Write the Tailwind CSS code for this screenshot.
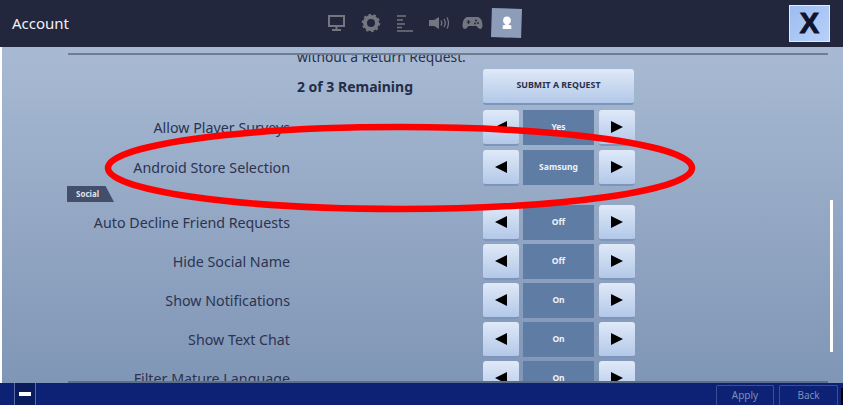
<!DOCTYPE html>
<html><head><meta charset="utf-8">
<script src="https://cdn.jsdelivr.net/npm/@tailwindcss/browser@4"></script>
</head>
<body class="m-0 bg-white overflow-hidden">
<div class="relative w-[843px] h-[405px] flex flex-col overflow-hidden font-['Noto_Sans',sans-serif]">
  <header class="h-[47px] shrink-0 bg-[#23273d] flex items-center relative">
    <span class="ml-3 text-[15px] text-[#eef1f7]">Account</span>
    <div class="absolute left-[327px] top-[8px] flex items-center text-[#7d7f8b]">
      <svg class="w-[20px] h-[20px] mr-[14px]" viewBox="0 0 20 20" fill="none" stroke="#74767f" stroke-width="2"><rect x="2" y="3" width="15" height="10"/><path d="M9.500 13v3M5 17h9"/></svg>
      <svg class="w-[20px] h-[20px] mr-[14px]" viewBox="0 0 20 20" fill="none"><circle cx="10" cy="10" r="6" stroke="#74767f" stroke-width="4"/><circle cx="10" cy="10" r="8" stroke="#74767f" stroke-width="2.400" stroke-dasharray="2.400 2.600"/></svg>
      <svg class="w-[20px] h-[20px] mr-[13px]" viewBox="0 0 20 20" fill="none" stroke="#74767f" stroke-width="1.600"><path d="M2 3h9M2 7h6M2 11h8M2 14.500h5M2 18h16"/></svg>
      <svg class="w-[22px] h-[20px] mr-[12px]" viewBox="0 0 22 20" fill="none"><path d="M1 7h5l5-3v12l-5-3H1z" fill="#74767f"/><path d="M13 7.500q1.500 2.500 0 5M16 6q2.500 4 0 8M19 4.500q3 5.500 0 11" stroke="#74767f" stroke-width="1.300"/></svg>
      <svg class="w-[21px] h-[20px] mr-[8px]" viewBox="0 0 21 20"><path d="M5 4h11q4 1 4.500 8 0 4-2.500 4-1.500 0-3.500-3h-8q-2 3-3.500 3-2.500 0-2.500-4Q1 5 5 4z" fill="#74767f"/><path d="M4.500 9h4M6.500 7v4" stroke="#23273d" stroke-width="1.200"/><circle cx="14" cy="7.500" r="1" fill="#23273d"/><circle cx="16" cy="10" r="1" fill="#23273d"/><circle cx="13" cy="10.500" r="1" fill="#23273d"/></svg>
      <div class="w-[31px] h-[30px] bg-[#8d9db9] [clip-path:polygon(3%_0,100%_3%,97%_100%,0_97%)] flex items-center justify-center">
        <svg class="w-[12px] h-[14px]" viewBox="0 0 14 16"><circle cx="7" cy="5" r="4.500" fill="#fff"/><path d="M5 8h4v2l3 1v4H2v-4l3-1z" fill="#fff"/></svg>
      </div>
    </div>
    <div class="absolute left-[789px] top-[5px] w-[41px] h-[37px] bg-gradient-to-br from-[#9dbdf0] to-[#b7d0f8] border border-[#e4ebf7] flex items-center justify-center font-['Liberation_Sans',sans-serif] font-bold text-[29px] [-webkit-text-stroke:1px_#10132c] text-[#10132c]">X</div>
  </header>

  <main class="flex-1 relative overflow-hidden bg-gradient-to-b from-[#a8bad3] to-[#8096b6] border-l-2 border-white">
    <div class="h-[8px] mx-[66px] w-[760px] border-b-2 border-[#6f7c92]"></div>
    <div class="absolute left-0 top-[8px] w-[706px] h-[14px] overflow-hidden"><p class="absolute left-[295px] top-[-8px] whitespace-nowrap text-[13.800px] text-[#2a304a]">without a Return Request.</p></div>
    <div class="flex items-center h-[36px] mt-[14px]">
      <div class="w-[411px] text-right pr-0 text-[14px] font-bold text-[#262c47] -translate-y-[1px]">2 of 3 Remaining</div>
      <button class="ml-[70px] w-[151px] h-[36px] rounded-[3px] bg-gradient-to-b from-[#dfe9f8] to-[#b3c8e8] border-b-2 border-[#7e95bb] text-[8.800px] font-bold text-[#2a304a]">SUBMIT A REQUEST</button>
    </div>
    <div class="flex flex-col mt-[5px]">
      <div class="flex items-center h-[36px] mb-[4px]"><div class="w-[288px] text-right text-[14.250px] text-[#2c3350]">Allow Player Surveys</div><div class="ml-[193px] flex gap-[4px]"><button class="w-[36px] h-[36px] rounded-[3px] bg-gradient-to-b from-[#dfe9f8] to-[#b3c8e8] border-b-2 border-[#7e95bb] flex items-center justify-center"><span class="w-0 h-0 border-y-[6px] border-y-transparent border-r-[12px] border-r-black"></span></button><div class="w-[71px] mr-[1px] h-[35px] bg-[#5f7ca4] flex items-center justify-center text-[8.500px] font-bold text-[#eef2f8]">Yes</div><button class="w-[36px] h-[36px] rounded-[3px] bg-gradient-to-b from-[#dfe9f8] to-[#b3c8e8] border-b-2 border-[#7e95bb] flex items-center justify-center"><span class="w-0 h-0 border-y-[6px] border-y-transparent border-l-[12px] border-l-black"></span></button></div></div>
      <div class="flex items-center h-[36px]"><div class="w-[288px] text-right text-[14.250px] text-[#2c3350]">Android Store Selection</div><div class="ml-[193px] flex gap-[4px]"><button class="w-[36px] h-[36px] rounded-[3px] bg-gradient-to-b from-[#dfe9f8] to-[#b3c8e8] border-b-2 border-[#7e95bb] flex items-center justify-center"><span class="w-0 h-0 border-y-[6px] border-y-transparent border-r-[12px] border-r-black"></span></button><div class="w-[71px] mr-[1px] h-[35px] bg-[#5f7ca4] flex items-center justify-center text-[8.500px] font-bold text-[#eef2f8]">Samsung</div><button class="w-[36px] h-[36px] rounded-[3px] bg-gradient-to-b from-[#dfe9f8] to-[#b3c8e8] border-b-2 border-[#7e95bb] flex items-center justify-center"><span class="w-0 h-0 border-y-[6px] border-y-transparent border-l-[12px] border-l-black"></span></button></div></div>
      <div class="h-[19px] flex items-end"><div class="ml-[65px] w-[47px] h-[16px] bg-[#434e6b] [clip-path:polygon(0_0,82%_0,100%_100%,0_100%)] text-[8px] font-bold text-[#dfe4ee] pl-[9px] leading-[16px] translate-y-[-3px]">Social</div></div>
      <div class="flex flex-col gap-[3px]">
        <div class="flex items-center h-[36px]"><div class="w-[288px] text-right text-[14.250px] text-[#2c3350]">Auto Decline Friend Requests</div><div class="ml-[193px] flex gap-[4px]"><button class="w-[36px] h-[36px] rounded-[3px] bg-gradient-to-b from-[#dfe9f8] to-[#b3c8e8] border-b-2 border-[#7e95bb] flex items-center justify-center"><span class="w-0 h-0 border-y-[6px] border-y-transparent border-r-[12px] border-r-black"></span></button><div class="w-[71px] mr-[1px] h-[35px] bg-[#5f7ca4] flex items-center justify-center text-[8.500px] font-bold text-[#eef2f8]">Off</div><button class="w-[36px] h-[36px] rounded-[3px] bg-gradient-to-b from-[#dfe9f8] to-[#b3c8e8] border-b-2 border-[#7e95bb] flex items-center justify-center"><span class="w-0 h-0 border-y-[6px] border-y-transparent border-l-[12px] border-l-black"></span></button></div></div>
        <div class="flex items-center h-[36px]"><div class="w-[288px] text-right text-[14.250px] text-[#2c3350]">Hide Social Name</div><div class="ml-[193px] flex gap-[4px]"><button class="w-[36px] h-[36px] rounded-[3px] bg-gradient-to-b from-[#dfe9f8] to-[#b3c8e8] border-b-2 border-[#7e95bb] flex items-center justify-center"><span class="w-0 h-0 border-y-[6px] border-y-transparent border-r-[12px] border-r-black"></span></button><div class="w-[71px] mr-[1px] h-[35px] bg-[#5f7ca4] flex items-center justify-center text-[8.500px] font-bold text-[#eef2f8]">Off</div><button class="w-[36px] h-[36px] rounded-[3px] bg-gradient-to-b from-[#dfe9f8] to-[#b3c8e8] border-b-2 border-[#7e95bb] flex items-center justify-center"><span class="w-0 h-0 border-y-[6px] border-y-transparent border-l-[12px] border-l-black"></span></button></div></div>
        <div class="flex items-center h-[36px]"><div class="w-[288px] text-right text-[14.250px] text-[#2c3350]">Show Notifications</div><div class="ml-[193px] flex gap-[4px]"><button class="w-[36px] h-[36px] rounded-[3px] bg-gradient-to-b from-[#dfe9f8] to-[#b3c8e8] border-b-2 border-[#7e95bb] flex items-center justify-center"><span class="w-0 h-0 border-y-[6px] border-y-transparent border-r-[12px] border-r-black"></span></button><div class="w-[71px] mr-[1px] h-[35px] bg-[#5f7ca4] flex items-center justify-center text-[8.500px] font-bold text-[#eef2f8]">On</div><button class="w-[36px] h-[36px] rounded-[3px] bg-gradient-to-b from-[#dfe9f8] to-[#b3c8e8] border-b-2 border-[#7e95bb] flex items-center justify-center"><span class="w-0 h-0 border-y-[6px] border-y-transparent border-l-[12px] border-l-black"></span></button></div></div>
        <div class="flex items-center h-[36px]"><div class="w-[288px] text-right text-[14.250px] text-[#2c3350]">Show Text Chat</div><div class="ml-[193px] flex gap-[4px]"><button class="w-[36px] h-[36px] rounded-[3px] bg-gradient-to-b from-[#dfe9f8] to-[#b3c8e8] border-b-2 border-[#7e95bb] flex items-center justify-center"><span class="w-0 h-0 border-y-[6px] border-y-transparent border-r-[12px] border-r-black"></span></button><div class="w-[71px] mr-[1px] h-[35px] bg-[#5f7ca4] flex items-center justify-center text-[8.500px] font-bold text-[#eef2f8]">On</div><button class="w-[36px] h-[36px] rounded-[3px] bg-gradient-to-b from-[#dfe9f8] to-[#b3c8e8] border-b-2 border-[#7e95bb] flex items-center justify-center"><span class="w-0 h-0 border-y-[6px] border-y-transparent border-l-[12px] border-l-black"></span></button></div></div>
        <div class="flex items-center h-[36px]"><div class="w-[288px] text-right text-[14.250px] text-[#2c3350]">Filter Mature Language</div><div class="ml-[193px] flex gap-[4px]"><button class="w-[36px] h-[36px] rounded-[3px] bg-gradient-to-b from-[#dfe9f8] to-[#b3c8e8] border-b-2 border-[#7e95bb] flex items-center justify-center"><span class="w-0 h-0 border-y-[6px] border-y-transparent border-r-[12px] border-r-black"></span></button><div class="w-[71px] mr-[1px] h-[35px] bg-[#5f7ca4] flex items-center justify-center text-[8.500px] font-bold text-[#eef2f8]">On</div><button class="w-[36px] h-[36px] rounded-[3px] bg-gradient-to-b from-[#dfe9f8] to-[#b3c8e8] border-b-2 border-[#7e95bb] flex items-center justify-center"><span class="w-0 h-0 border-y-[6px] border-y-transparent border-l-[12px] border-l-black"></span></button></div></div>
      </div>
    </div>
    <div class="absolute left-[828px] top-[153px] w-[3px] h-[152px] bg-white"></div>
    <div class="absolute left-[66px] top-[334px] w-[760px] h-[2px] bg-[#5d6d8c]"></div>
  </main>

  <footer class="h-[22px] shrink-0 bg-[#0d2274] flex items-stretch relative">
    <div class="ml-[14px] w-[22px] border-x border-[#5b6ba3] bg-[#0a1b5c] flex items-center justify-center"><span class="w-[12px] h-[4px] bg-white"></span></div>
    <div class="ml-auto mr-[5px] flex gap-[5px] pt-[2px]">
      <div class="w-[58px] border border-b-0 border-[#3b4f94] rounded-t-[2px] text-center text-[10px] leading-[19px] text-[#7d8ebb]">Apply</div>
      <div class="w-[59px] border border-b-0 border-[#3b4f94] rounded-t-[2px] text-center text-[10px] leading-[19px] text-[#7d8ebb]">Back</div>
    </div>
    <div class="absolute right-0 top-[5px] w-[2px] h-[17px] bg-black"></div>
  </footer>

  <svg class="absolute left-0 top-0 pointer-events-none" width="843" height="405" viewBox="0 0 843 405"><ellipse cx="400" cy="168" rx="292" ry="41" fill="none" stroke="#ff0000" stroke-width="6.500"/></svg>
</div>
</body></html>
